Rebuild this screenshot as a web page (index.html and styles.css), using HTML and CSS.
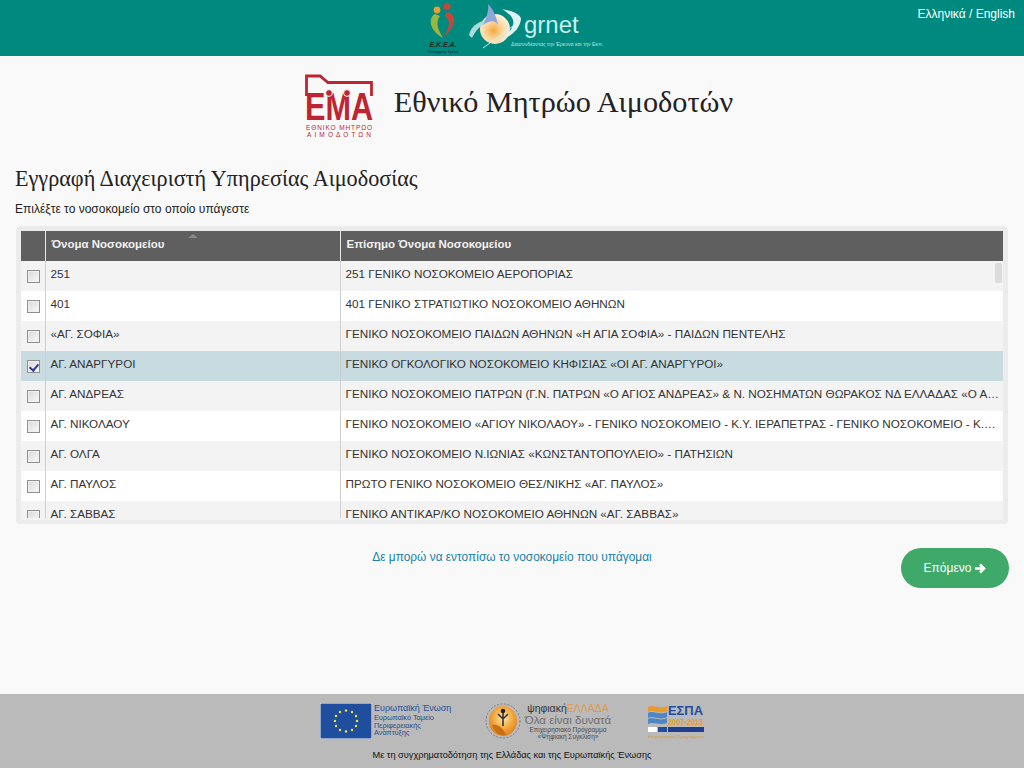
FILE: index.html
```html
<!DOCTYPE html>
<html lang="el">
<head>
<meta charset="utf-8">
<title>Εθνικό Μητρώο Αιμοδοτών</title>
<link rel="stylesheet" href="styles.css">
</head>
<body>
<header class="topbar">
  <div class="top-logos">
    <svg class="logo-ekea" width="46" height="54" viewBox="0 0 46 54">
      <path d="M15 13C8 17 9 29 23 37C18 28 15 22 20 15Z" fill="#9bb640"/>
      <path d="M27 11C36 12 38 24 23 37C29 27 32 20 25 15Z" fill="#c8453a"/>
      <circle cx="17" cy="9" r="3.4" fill="#e8a02e"/>
      <circle cx="27" cy="5.500" r="3.600" fill="#c8453a"/>
      <text x="23" y="46" class="ekea-name">Ε.Κ.Ε.Α.</text>
      <text x="23" y="52" class="ekea-sub">Υπουργείο Υγείας</text>
    </svg>
    <svg class="logo-grnet" width="140" height="54" viewBox="0 0 140 54">
      <defs>
        <radialGradient id="sun" cx="0.45" cy="0.55" r="0.55">
          <stop offset="0" stop-color="#f5a93c"/>
          <stop offset="0.55" stop-color="#f9d9a0"/>
          <stop offset="1" stop-color="#fbf1dc"/>
        </radialGradient>
      </defs>
      <circle cx="26" cy="28" r="15" fill="url(#sun)"/>
      <path d="M0 34C2 24 12 18 27 18C16 21 8 26 3 37Z" fill="#a9dcdc"/>
      <path d="M14 24C18 16 20 8 19 3C23 7 27 13 29 24C26 19 21 19 14 24Z" fill="#8fa6d8"/>
      <path d="M33 8C44 10 52 14 52 18C51 28 42 36 31 39C40 33 46 25 44 19C43 15 39 12 33 8Z" fill="#dff3f3"/>
      <path d="M14 47L44 25" stroke="#d8f0f0" stroke-width="1"/>
      <text x="55" y="32" class="grnet-name">grnet</text>
      <text x="42" y="45" class="grnet-sub">Διασυνδέοντας την Έρευνα και την Εκπ.</text>
    </svg>
  </div>
  <div class="lang"><a href="#">Ελληνικά</a> / <a href="#">English</a></div>
</header>

<main class="content">
  <div class="brand">
    <svg class="logo-ema" width="68" height="64" viewBox="0 0 68 64">
      <path d="M1.500 22V2H15L23 8.500H66.500V22" fill="none" stroke="#c02432" stroke-width="2.800"/>
      <text x="0" y="46" class="ema-mark" textLength="68" lengthAdjust="spacingAndGlyphs">ΕΜΑ</text>
      <circle cx="24" cy="19" r="3.400" class="ema-dot"/>
      <circle cx="42" cy="19" r="3.400" class="ema-dot"/>
      <text x="1" y="56" class="ema-line" textLength="66">ΕΘΝΙΚΟ ΜΗΤΡΩΟ</text>
      <text x="2" y="63" class="ema-line" textLength="64">ΑΙΜΟΔΟΤΩΝ</text>
    </svg>
    <h1 class="brand-title">Εθνικό Μητρώο Αιμοδοτών</h1>
  </div>

  <h2 class="page-title">Εγγραφή Διαχειριστή Υπηρεσίας Αιμοδοσίας</h2>
  <p class="hint">Επιλέξτε το νοσοκομείο στο οποίο υπάγεστε</p>

  <section class="grid-wrap">
    <table class="grid grid-head">
      <colgroup><col class="col-check"><col class="col-name"><col></colgroup>
      <thead>
        <tr>
          <th></th>
          <th class="sorted">Όνομα Νοσοκομείου<span class="sort-arrow"></span></th>
          <th>Επίσημο Όνομα Νοσοκομείου</th>
        </tr>
      </thead>
    </table>
    <div class="grid-body">
      <div class="grid-clip">
        <table class="grid">
          <colgroup><col class="col-check"><col class="col-name"><col></colgroup>
          <tbody>
            <tr><td class="check"><input type="checkbox"></td><td>251</td><td>251 ΓΕΝΙΚΟ ΝΟΣΟΚΟΜΕΙΟ ΑΕΡΟΠΟΡΙΑΣ</td></tr>
            <tr><td class="check"><input type="checkbox"></td><td>401</td><td>401 ΓΕΝΙΚΟ ΣΤΡΑΤΙΩΤΙΚΟ ΝΟΣΟΚΟΜΕΙΟ ΑΘΗΝΩΝ</td></tr>
            <tr><td class="check"><input type="checkbox"></td><td>«ΑΓ. ΣΟΦΙΑ»</td><td>ΓΕΝΙΚΟ ΝΟΣΟΚΟΜΕΙΟ ΠΑΙΔΩΝ ΑΘΗΝΩΝ «Η ΑΓΙΑ ΣΟΦΙΑ» - ΠΑΙΔΩΝ ΠΕΝΤΕΛΗΣ</td></tr>
            <tr class="selected"><td class="check"><input type="checkbox" checked></td><td>ΑΓ. ΑΝΑΡΓΥΡΟΙ</td><td>ΓΕΝΙΚΟ ΟΓΚΟΛΟΓΙΚΟ ΝΟΣΟΚΟΜΕΙΟ ΚΗΦΙΣΙΑΣ «ΟΙ ΑΓ. ΑΝΑΡΓΥΡΟΙ»</td></tr>
            <tr><td class="check"><input type="checkbox"></td><td>ΑΓ. ΑΝΔΡΕΑΣ</td><td>ΓΕΝΙΚΟ ΝΟΣΟΚΟΜΕΙΟ ΠΑΤΡΩΝ (Γ.Ν. ΠΑΤΡΩΝ «Ο ΑΓΙΟΣ ΑΝΔΡΕΑΣ» &amp; Ν. ΝΟΣΗΜΑΤΩΝ ΘΩΡΑΚΟΣ ΝΔ ΕΛΛΑΔΑΣ «Ο ΑΓΙΟΣ ΛΟΥΚΑΣ»)</td></tr>
            <tr><td class="check"><input type="checkbox"></td><td>ΑΓ. ΝΙΚΟΛΑΟΥ</td><td>ΓΕΝΙΚΟ ΝΟΣΟΚΟΜΕΙΟ «ΑΓΙΟΥ ΝΙΚΟΛΑΟΥ» - ΓΕΝΙΚΟ ΝΟΣΟΚΟΜΕΙΟ - Κ.Υ. ΙΕΡΑΠΕΤΡΑΣ - ΓΕΝΙΚΟ ΝΟΣΟΚΟΜΕΙΟ - Κ.Υ. ΣΗΤΕΙΑΣ</td></tr>
            <tr><td class="check"><input type="checkbox"></td><td>ΑΓ. ΟΛΓΑ</td><td>ΓΕΝΙΚΟ ΝΟΣΟΚΟΜΕΙΟ Ν.ΙΩΝΙΑΣ «ΚΩΝΣΤΑΝΤΟΠΟΥΛΕΙΟ» - ΠΑΤΗΣΙΩΝ</td></tr>
            <tr><td class="check"><input type="checkbox"></td><td>ΑΓ. ΠΑΥΛΟΣ</td><td>ΠΡΩΤΟ ΓΕΝΙΚΟ ΝΟΣΟΚΟΜΕΙΟ ΘΕΣ/ΝΙΚΗΣ «ΑΓ. ΠΑΥΛΟΣ»</td></tr>
            <tr><td class="check"><input type="checkbox"></td><td>ΑΓ. ΣΑΒΒΑΣ</td><td>ΓΕΝΙΚΟ ΑΝΤΙΚΑΡ/ΚΟ ΝΟΣΟΚΟΜΕΙΟ ΑΘΗΝΩΝ «ΑΓ. ΣΑΒΒΑΣ»</td></tr>
          </tbody>
        </table>
      </div>
      <div class="scroll-thumb"></div>
    </div>
  </section>

  <div class="actions">
    <a class="not-found" href="#">Δε μπορώ να εντοπίσω το νοσοκομείο που υπάγομαι</a>
    <a class="next" href="#">Επόμενο
      <svg class="next-arrow" width="12" height="11" viewBox="0 0 12 11"><path d="M1 5.500H9.500M6 1.500L10 5.500L6 9.500" fill="none" stroke="#fff" stroke-width="2.600"/></svg>
    </a>
  </div>
</main>

<footer class="footer">
  <div class="sponsors">
    <div class="eu">
      <svg class="eu-flag" width="52" height="36" viewBox="0 0 52 36">
        <rect width="52" height="36" fill="#1f4e9e" stroke="#fff"/>
        <g fill="#f4e23c">
          <circle cx="26" cy="7.500" r="1.200"/><circle cx="32" cy="9" r="1.200"/><circle cx="36" cy="13" r="1.200"/>
          <circle cx="37" cy="18" r="1.200"/><circle cx="36" cy="23" r="1.200"/><circle cx="32" cy="27" r="1.200"/>
          <circle cx="26" cy="28.500" r="1.200"/><circle cx="20" cy="27" r="1.200"/><circle cx="16" cy="23" r="1.200"/>
          <circle cx="15" cy="18" r="1.200"/><circle cx="16" cy="13" r="1.200"/><circle cx="20" cy="9" r="1.200"/>
        </g>
      </svg>
      <div class="eu-text">
        <div class="eu-title">Ευρωπαϊκή Ένωση</div>
        <div>Ευρωπαϊκό Ταμείο</div>
        <div>Περιφερειακής</div>
        <div>Ανάπτυξης</div>
      </div>
    </div>
    <div class="digital">
      <svg width="36" height="36" viewBox="0 0 36 36">
        <defs>
          <radialGradient id="glow" cx="0.5" cy="0.4" r="0.6">
            <stop offset="0" stop-color="#fbe6b0"/>
            <stop offset="0.6" stop-color="#f3a63a"/>
            <stop offset="1" stop-color="#dd7f1c"/>
          </radialGradient>
        </defs>
        <ellipse cx="18" cy="18" rx="17" ry="17" fill="none" stroke="#666" stroke-dasharray="2 1.500" stroke-width="0.700"/>
        <ellipse cx="18" cy="18" rx="14" ry="15" fill="url(#glow)"/>
        <path d="M7 22C13 21 18 25 21 32C13 33 9 28 7 22Z" fill="#c96f14"/>
        <circle cx="18" cy="8" r="2.300" fill="#222"/>
        <path d="M18 10V23M13 11L17 15H19L23 11" fill="none" stroke="#333" stroke-width="1.600"/>
      </svg>
      <div class="digital-text">
        <div class="digital-brand">ψηφιακή<span>ΕΛΛΑΔΑ</span></div>
        <div class="digital-slogan">Όλα είναι δυνατά</div>
        <div>Επιχειρησιακό Πρόγραμμα</div>
        <div>«Ψηφιακή Σύγκλιση»</div>
      </div>
    </div>
    <div class="espa">
      <svg width="58" height="36" viewBox="0 0 58 36">
        <path d="M1 4C6 1 12 7 20 3V8C12 12 6 6 1 9Z" fill="#e89a2c"/>
        <path d="M1 10C6 7 12 13 20 9V14C12 18 6 12 1 15Z" fill="#4f86c6"/>
        <path d="M1 16C6 13 12 19 20 15V20C12 23 6 18 1 21Z" fill="#4f86c6"/>
        <text x="21" y="12" class="espa-name" textLength="35" lengthAdjust="spacingAndGlyphs">ΕΣΠΑ</text>
        <text x="21" y="22" class="espa-years" textLength="35" lengthAdjust="spacingAndGlyphs">2007-2013</text>
        <rect x="1" y="24" width="9" height="5" fill="#fff"/>
        <rect x="11" y="24" width="9" height="5" fill="#1f4e9e"/>
        <rect x="21" y="24" width="36" height="5" fill="#1f3f8e"/>
        <text x="1" y="34.500" class="espa-note" textLength="56" lengthAdjust="spacingAndGlyphs">Επιχειρησιακά Προγράμματα</text>
      </svg>
    </div>
  </div>
  <p class="funding">Με τη συγχρηματοδότηση της Ελλάδας και της Ευρωπαϊκής Ένωσης</p>
</footer>
</body>
</html>
```
FILE: styles.css
```css
* { box-sizing: border-box; }

html, body { margin: 0; height: 768px; }

body {
  display: flex;
  flex-direction: column;
  overflow: hidden;
  background: #f9f9f9;
  color: #222;
  font-family: "Liberation Sans", Arial, sans-serif;
  font-size: 12px;
}

.topbar {
  position: relative;
  flex: none;
  height: 56px;
  background: #00897f;
}

.top-logos {
  display: flex;
  justify-content: center;
  gap: 3px;
  padding: 1px 0 0 5px;
}

.ekea-name { font: italic bold 7px "Liberation Sans", sans-serif; fill: #1a2a20; text-anchor: middle; }
.ekea-sub { font: 4px "Liberation Sans", sans-serif; fill: #123; text-anchor: middle; }
.grnet-name { font: 24px "Liberation Sans", sans-serif; fill: #c8f0ee; }
.grnet-sub { font: 5.200px "Liberation Sans", sans-serif; fill: #bfe6e3; }

.lang {
  position: absolute;
  top: 7px;
  right: 9px;
  color: #fff;
  font-size: 12px;
}
.lang a { color: #fff; text-decoration: none; }

.content {
  flex: 1;
  padding: 0 15px;
}

.brand {
  display: flex;
  align-items: center;
  justify-content: center;
  gap: 21px;
  padding: 18px 0 0 0;
  margin-left: 14px;
}

.logo-ema { flex: none; }
.ema-mark { font: bold 38px "Liberation Sans", sans-serif; fill: #c02432; }
.ema-dot { fill: #c02432; stroke: #f9f9f9; stroke-width: 1; }
.ema-line { font: 6.500px "Liberation Sans", sans-serif; fill: #c02432; }

.brand-title {
  margin: 0 0 9px;
  color: #222;
  font: normal 30.250px/36px "Liberation Serif", "Times New Roman", serif;
}

.page-title {
  margin: 25px 0 0;
  color: #222;
  font: normal 22.200px/32px "Liberation Serif", "Times New Roman", serif;
}

.hint {
  margin: 6px 0 0;
  line-height: 16px;
  color: #222;
}

.grid-wrap {
  margin: 9px 1px 0;
  height: 298px;
  padding: 5px 5px 4px;
  border-radius: 4px;
  background: #ececec;
}

.grid {
  width: 100%;
  border-collapse: collapse;
  table-layout: fixed;
}

.col-check { width: 24px; }
.col-name { width: 295px; }

.grid-head th {
  position: relative;
  height: 30px;
  padding: 0 5px 4px 6px;
  border-left: 1px solid #e8e8e8;
  background: #5f5f5f;
  color: #f2f2f2;
  font-size: 11.500px;
  font-weight: bold;
  text-align: left;
}
.grid-head th:first-child { border-left: 0; }

.sort-arrow {
  position: absolute;
  top: 3px;
  left: 142px;
  width: 0;
  height: 0;
  border: 5px solid transparent;
  border-top: 0;
  border-bottom: 4px solid #8a8a8a;
}

.grid-body {
  position: relative;
  height: 259px;
  background: #f3f3f3;
}

.grid-clip {
  height: 257px;
  overflow: hidden;
}

.grid td {
  height: 30px;
  padding: 0 3px 4px 5px;
  overflow: hidden;
  border-left: 1px solid #cfcfcf;
  background: #fff;
  color: #333;
  font-size: 11.700px;
  line-height: 14px;
  white-space: nowrap;
  text-overflow: ellipsis;
}
.grid tr:nth-child(odd) td { background: #f3f3f3; }
.grid tr.selected td { background: #c8dbe0; }
.grid td:first-child { border-left: 0; }

.grid td.check {
  padding: 0 0 0 6px;
}
.check input {
  position: relative;
  display: block;
  width: 13px;
  height: 13px;
  margin: 0;
  appearance: none;
  border: 1px solid #8e8f8f;
  background: linear-gradient(135deg, #d8d8d8, #fafafa);
  box-shadow: inset 0 0 0 1px #f0f0f0;
}
.check input:checked::before {
  content: "";
  position: absolute;
  left: 3px;
  top: 1px;
  width: 4px;
  height: 7px;
  border: solid #3a3a9a;
  border-width: 0 2px 2px 0;
  transform: rotate(40deg);
}

.scroll-thumb {
  position: absolute;
  top: 2px;
  right: 1px;
  width: 7px;
  height: 20px;
  border-radius: 2px;
  background: #dcdcdc;
}

.actions {
  position: relative;
  display: flex;
  justify-content: center;
  align-items: flex-start;
  margin: 24px 0 0;
  height: 40px;
}

.not-found {
  padding-top: 1px;
  color: #1a82a8;
  font-size: 11.900px;
  text-decoration: none;
  line-height: 16px;
}

.next {
  position: absolute;
  top: 0;
  right: 0;
  display: flex;
  align-items: center;
  justify-content: center;
  gap: 3px;
  width: 108px;
  height: 40px;
  border-radius: 20px;
  background: #3fa96a;
  color: #fff;
  text-decoration: none;
}

.footer {
  flex: none;
  height: 74px;
  background: #bababa;
}

.sponsors {
  display: flex;
  justify-content: center;
  align-items: flex-start;
  gap: 34px;
  padding: 9px 0 0 1px;
  height: 55px;
}

.eu { display: flex; gap: 2px; width: 131px; }
.eu-flag { flex: none; }
.eu-text { font-size: 7.300px; line-height: 7.500px; color: #1f4e8e; white-space: nowrap; }
.eu-title { font-size: 9px; line-height: 11px; color: #1f4e9e; }

.digital { display: flex; gap: 2px; }
.digital-text { width: 90px; color: #4a4a4a; font-size: 6.500px; line-height: 6.500px; text-align: center; white-space: nowrap; }
.digital-brand { font-size: 10.500px; line-height: 11px; color: #333; }
.digital-brand span { color: #e09a44; }
.digital-slogan { font-size: 11.500px; line-height: 13px; color: #6e6e6e; }

.espa-name { font: bold 13px "Liberation Sans", sans-serif; fill: #1f4e9e; }
.espa-years { font: bold 9px "Liberation Sans", sans-serif; fill: #e89a2c; }
.espa-note { font: 4px "Liberation Sans", sans-serif; fill: #d89a3a; }

.funding {
  margin: 0;
  color: #111;
  font-size: 9.200px;
  line-height: 12px;
  text-align: center;
}
```
